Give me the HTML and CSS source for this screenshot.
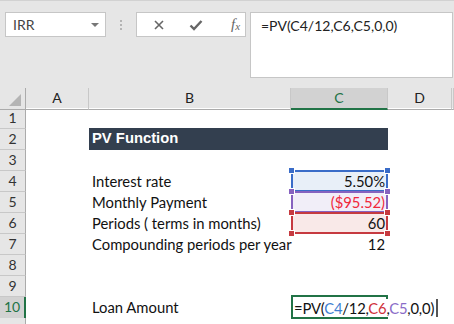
FILE: index.html
```html
<!doctype html>
<html lang="en">
<head>
    <meta charset="UTF-8">
    <title>PV Function</title>
    <link rel="stylesheet" href="styles.css">
</head>
<body>

<div class="toolbar">
    <div class="namebox">
        <span>IRR</span>
        <i class="caret"></i>
    </div>
    <div class="dots"><b></b><b></b><b></b></div>
    <div class="fbtns">
        <svg class="ico" width="12" height="12" viewBox="0 0 12 12"><path d="M2 2L10 10M10 2L2 10" stroke="#666" stroke-width="1.6" fill="none"/></svg>
        <svg class="ico" width="14" height="12" viewBox="0 0 14 12"><path d="M1.5 6.5L5 10L12.5 2" stroke="#666" stroke-width="2.4" fill="none"/></svg>
        <span class="fx">f<sub>x</sub></span>
    </div>
    <div class="fbar">=PV(C4/12,C6,C5,0,0)</div>
</div>

<div class="sheet">
    <div class="row head">
        <div class="rh corner"><i></i></div>
        <div class="ch">A</div>
        <div class="ch">B</div>
        <div class="ch active">C</div>
        <div class="ch">D</div>
        <div class="ch"></div>
    </div>

    <div class="row"><div class="rh">1</div><div></div><div></div><div></div><div></div></div>
    <div class="row">
        <div class="rh">2</div><div></div>
        <div class="title">PV Function</div>
        <div class="title"></div><div></div>
    </div>
    <div class="row"><div class="rh">3</div><div></div><div></div><div></div><div></div></div>
    <div class="row">
        <div class="rh">4</div><div></div>
        <div class="lbl">Interest rate</div>
        <div class="val ref blue">5.50%<i class="h tl"></i><i class="h tr"></i><i class="h bl"></i><i class="h br"></i></div>
        <div></div>
    </div>
    <div class="row">
        <div class="rh">5</div><div></div>
        <div class="lbl">Monthly Payment</div>
        <div class="val ref purple neg">($95.52)<i class="h tl"></i><i class="h tr"></i><i class="h bl"></i><i class="h br"></i></div>
        <div></div>
    </div>
    <div class="row">
        <div class="rh">6</div><div></div>
        <div class="lbl">Periods ( terms in months)</div>
        <div class="val ref red">60<i class="h tl"></i><i class="h tr"></i><i class="h bl"></i><i class="h br"></i></div>
        <div></div>
    </div>
    <div class="row">
        <div class="rh">7</div><div></div>
        <div class="lbl">Compounding periods per year</div>
        <div class="val">12</div>
        <div></div>
    </div>
    <div class="row"><div class="rh">8</div><div></div><div></div><div></div><div></div></div>
    <div class="row"><div class="rh">9</div><div></div><div></div><div></div><div></div></div>
    <div class="row">
        <div class="rh active">10</div><div></div>
        <div class="lbl">Loan Amount</div>
        <div class="edit">
            <span class="etext">=PV(<em class="cb">C4</em>/12,<em class="cr">C6</em>,<em class="cp">C5</em>,0,0)<i class="cursor"></i></span>
        </div>
        <div></div>
    </div>
    <div class="row"><div class="rh"></div><div></div><div></div><div></div><div></div></div>
</div>

</body>
</html>
```

FILE: styles.css
```css
body{
    margin: 0;
    width: 454px;
    height: 324px;
    overflow: hidden;
    background-color: #fff;
    font-family: Lato, "Liberation Sans", sans-serif;
}
.toolbar{
    height: 88px;
    box-sizing: border-box;
    background-color: #e6e6e6;
    border-top: 1px solid #d2d2d2;
    position: relative;
    display: flex;
    align-items: flex-start;
    padding-top: 11px;
}
.namebox{
    margin-left: 5px;
    width: 101px;
    height: 25px;
    box-sizing: border-box;
    background-color: #fff;
    border: 1px solid #c6c6c6;
    display: flex;
    align-items: center;
    justify-content: space-between;
    padding: 0 6px 0 7px;
    font-size: 14px;
    color: #444;
}
.caret{
    width: 0;
    height: 0;
    border-left: 4px solid transparent;
    border-right: 4px solid transparent;
    border-top: 4px solid #777;
}
.dots{
    width: 30px;
    height: 25px;
    display: flex;
    flex-direction: column;
    align-items: center;
    justify-content: center;
    gap: 2px;
}
.dots b{
    width: 2px;
    height: 2px;
    background-color: #b4b4b4;
}
.fbtns{
    width: 110px;
    height: 25px;
    box-sizing: border-box;
    background-color: #fff;
    border: 1px solid #c6c6c6;
    display: flex;
    align-items: center;
    padding-left: 16px;
    gap: 24px;
}
.fx{
    font-family: "Liberation Serif", serif;
    font-style: italic;
    font-size: 15px;
    color: #666;
    line-height: 1;
    margin-left: 4px;
}
.fx sub{
    font-size: 11px;
    vertical-align: -1px;
}
.fbar{
    margin-left: 4px;
    width: 203px;
    height: 66px;
    box-sizing: border-box;
    background-color: #fff;
    border: 1px solid #c6c6c6;
    padding: 4px 0 0 10px;
    font-size: 14px;
    color: #222;
}

.row{
    display: grid;
    grid-template-columns: 26px 63px 202px 97px 64px 2px;
    height: 21px;
    font-size: 14.8px;
    color: #111;
}
.head{
    height: 20px;
    background-color: #e6e6e6;
    font-size: 14px;
}
.rh{
    background-color: #e6e6e6;
    border-right: 1px solid #ababab;
    border-bottom: 1px solid #c8c8c8;
    box-sizing: border-box;
    text-align: center;
    line-height: 20px;
    font-size: 14px;
    color: #333;
}
.rh.active{
    background-color: #d2d2d2;
    border-right: 2px solid #217346;
    color: #217346;
}
.corner{
    position: relative;
    border-bottom: 1px solid #ababab;
}
.corner i{
    position: absolute;
    right: 4px;
    bottom: 3px;
    width: 0;
    height: 0;
    border-left: 12px solid transparent;
    border-bottom: 12px solid #b4b4b4;
}
.ch{
    border-right: 1px solid #c8c8c8;
    border-bottom: 1px solid #ababab;
    box-sizing: border-box;
    text-align: center;
    line-height: 20px;
    color: #222;
}
.ch.active{
    background-color: #d2d2d2;
    border-bottom: 2px solid #217346;
    color: #217346;
}
.title{
    background-color: #333f4f;
    color: #fff;
    font-weight: bold;
    font-family: "Liberation Sans", Arial, sans-serif;
    padding-left: 3px;
    line-height: 21px;
    margin-top: -1px;
    height: 22px;
}
.lbl{
    padding-left: 3px;
    line-height: 21px;
    white-space: nowrap;
}
.val{
    text-align: right;
    padding-right: 3px;
    line-height: 21px;
}
.neg{
    color: #f0283c;
}
.ref{
    position: relative;
    margin-top: -1px;
    height: 22px;
    box-sizing: border-box;
    border: 2px solid;
    line-height: 18px;
    padding-right: 1px;
}
.blue{
    border-color: #3a6cc8;
    background-color: #e8eff8;
}
.purple{
    border-color: #8662bf;
    background-color: #f1eef8;
}
.red{
    border-color: #c63a40;
    background-color: #f9e9e8;
}
.h{
    position: absolute;
    width: 5px;
    height: 5px;
    outline: 1px solid #fff;
}
.blue .h{ background-color: #3a6cc8; }
.purple .h{ background-color: #8662bf; }
.red .h{ background-color: #c63a40; }
.tl{ left: -4px; top: -4px; }
.tr{ right: -4px; top: -4px; }
.bl{ left: -4px; bottom: -4px; }
.br{ right: -4px; bottom: -4px; }

.edit{
    position: relative;
    margin-top: -2px;
    height: 24px;
    box-sizing: border-box;
    border: 2px solid #217346;
}
.etext{
    position: absolute;
    left: 0;
    top: 2px;
    background-color: #fff;
    padding: 0 2px 0 1px;
    line-height: 18px;
    white-space: nowrap;
    color: #111;
    letter-spacing: -0.2px;
}
.etext em{
    font-style: normal;
}
.cb{ color: #3f7fd2; }
.cr{ color: #d0303a; }
.cp{ color: #8a6cc8; }
.cursor{
    display: inline-block;
    width: 2px;
    height: 18px;
    background-color: #555;
    vertical-align: top;
    margin-left: 2px;
}
```
